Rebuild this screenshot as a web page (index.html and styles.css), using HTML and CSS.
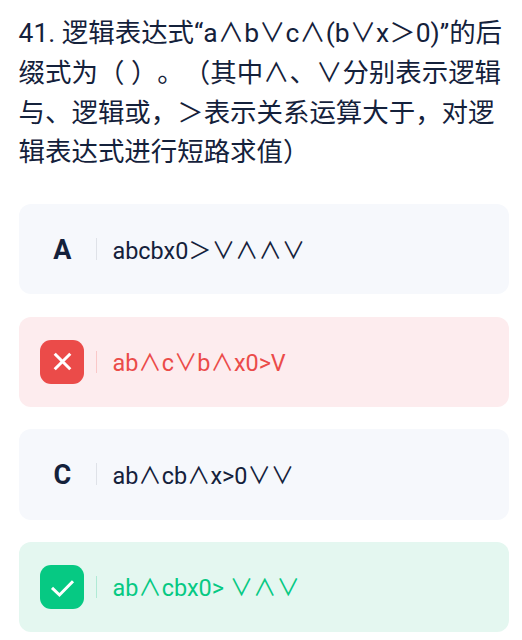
FILE: index.html
```html
<!DOCTYPE html>
<html lang="zh-CN">

<head>
    <meta charset="UTF-8">
    <meta name="viewport" content="width=device-width, initial-scale=1.0">
    <title>逻辑表达式</title>
    <link rel="stylesheet" href="styles.css">
</head>

<body>
    <div class="question">
        <div>41. 逻辑表达式“a∧b∨c∧(b∨x＞0)”的后</div>
        <div>缀式为（ ）。（其中∧、∨分别表示逻辑</div>
        <div>与、逻辑或，＞表示关系运算大于，对逻</div>
        <div>辑表达式进行短路求值）</div>
    </div>

    <div class="options">
        <div class="option">
            <div class="mark">A</div>
            <div class="line"></div>
            <div class="text">abcbx0＞∨∧∧∨</div>
        </div>
        <div class="option wrong">
            <div class="mark">
                <svg width="44" height="44" viewBox="0 0 44 44">
                    <path d="M14.7 13.7L30.3 29.3M30.3 13.7L14.7 29.3" />
                </svg>
            </div>
            <div class="line"></div>
            <div class="text">ab∧c∨b∧x0&gt;V</div>
        </div>
        <div class="option">
            <div class="mark">C</div>
            <div class="line"></div>
            <div class="text">ab∧cb∧x&gt;0∨∨</div>
        </div>
        <div class="option right">
            <div class="mark">
                <svg width="44" height="44" viewBox="0 0 44 44">
                    <path d="M12 22.8L19.5 30L33 16.2" />
                </svg>
            </div>
            <div class="line"></div>
            <div class="text">ab∧cbx0&gt; ∨∧∨</div>
        </div>
    </div>
</body>

</html>
```
FILE: styles.css
```css
body {
    font-family: Roboto, "Noto Sans CJK SC", sans-serif;
    margin: 0;
    padding: 13.2px 13px 0 18.6px;
    color: #14213b;
    background: #fff;
    text-spacing-trim: space-all;
}

.question {
    font-size: 26.45px;
    line-height: 39.7px;
    white-space: nowrap;
}

.options {
    display: flex;
    flex-direction: column;
    gap: 22.2px;
    margin-top: 32px;
}

.option {
    display: flex;
    align-items: center;
    box-sizing: border-box;
    height: 90.4px;
    padding-left: 21.7px;
    border-radius: 12px;
    background: #f6f8fc;
}

.mark {
    width: 44px;
    height: 44px;
    border-radius: 11px;
    font-size: 27px;
    font-weight: 700;
    line-height: 47px;
    text-align: center;
}

.mark svg {
    display: block;
    fill: none;
    stroke: #fff;
    stroke-width: 3;
}

.line {
    width: 1px;
    height: 22px;
    margin: 0 15.2px 0 12px;
    background: #dfe2e8;
}

.text {
    padding-top: 3px;
    font-size: 23.4px;
    line-height: 36px;
    white-space: pre;
}

.wrong {
    background: #fdecee;
    color: #eb4b49;
}

.wrong .mark {
    background: #eb4b49;
}

.wrong .line {
    background: #fac8c8;
}

.right {
    background: #e4f7f0;
    color: #06c983;
}

.right .mark {
    background: #06c983;
}

.right .line {
    background: #b0ead5;
}
```
